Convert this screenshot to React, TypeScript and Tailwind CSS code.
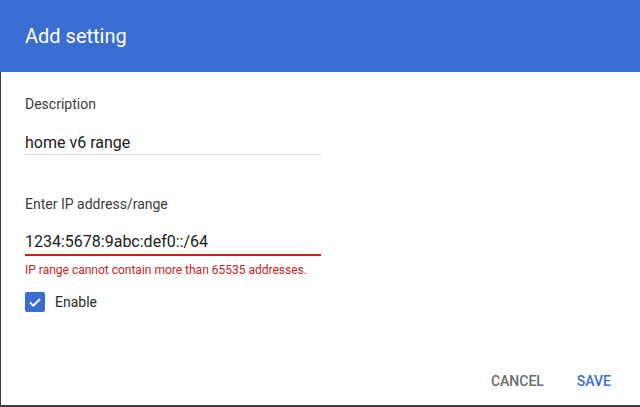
import React from "react";

export default function App() {
  return (
    <div className="w-[640px] h-[407px] flex flex-col bg-white font-['Roboto',sans-serif] overflow-hidden">
      <div className="h-[72px] shrink-0 bg-[#3a6cd2] flex items-center px-[25px]">
        <span className="text-white text-[20px] leading-[24px]">Add setting</span>
      </div>
      <div className="flex-1 flex flex-col border-l border-b-2 border-[#3c3c3c] pl-[24px]">
        <div className="mt-[22px] text-[14px] leading-[20px] text-[#3c3c3c]">Description</div>
        <div className="mt-[17px] w-[296px] h-[24px] border-b border-[#dcdcdc] text-[16px] leading-[24px] text-[#202020]">
          home v6 range
        </div>
        <div className="mt-[39px] text-[14px] leading-[20px] text-[#3c3c3c]">Enter IP address/range</div>
        <div className="mt-[16px] w-[296px] h-[26px] border-b-2 border-[#c5221f] text-[16px] leading-[24px] text-[#202020]">
          1234:5678:9abc:def0::/64
        </div>
        <div className="mt-[6px] text-[12px] leading-[16px] text-[#c5221f]">
          IP range cannot contain more than 65535 addresses.
        </div>
        <div className="mt-[14px] flex items-center h-[20px]">
          <div className="w-[20px] h-[20px] rounded-[2px] bg-[#3a6cd2] flex items-center justify-center">
            <svg width="16" height="16" viewBox="0 0 24 24" fill="none">
              <path d="M4.5 12.5l5 5L19.5 7.5" stroke="white" strokeWidth="3" strokeLinecap="butt" strokeLinejoin="miter" />
            </svg>
          </div>
          <span className="ml-[10px] text-[14px] leading-[20px] text-[#2a2a2a]">Enable</span>
        </div>
        <div className="flex-1" />
        <div className="flex justify-end items-center pr-[29px] pb-[14px] gap-[33px]">
          <span className="text-[14px] leading-[20px] font-medium text-[#6b6b6b]">CANCEL</span>
          <span className="text-[14px] leading-[20px] font-medium text-[#3a6cd2]">SAVE</span>
        </div>
      </div>
    </div>
  );
}
